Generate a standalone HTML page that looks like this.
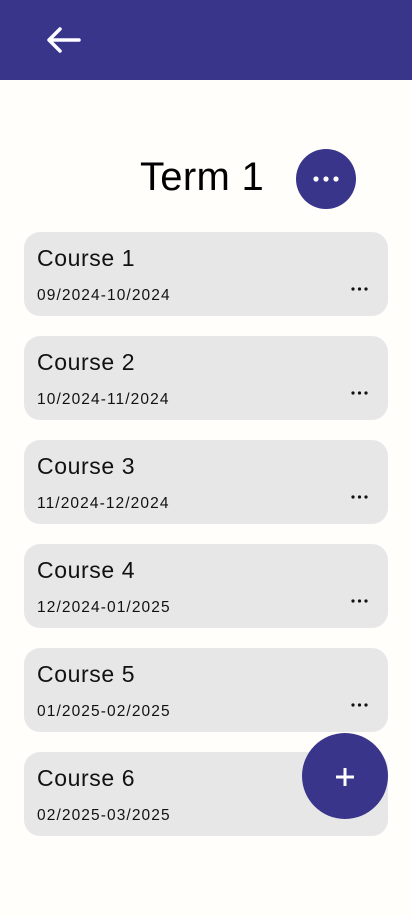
<!DOCTYPE html>
<html><head><style>
body{margin:0;width:412px;height:917px;background:#fffefa;font-family:"Liberation Sans",sans-serif;position:relative;overflow:hidden}
.hdr{position:absolute;left:0;top:0;width:412px;height:80px;background:#38358b}
.t{position:absolute;left:140px;top:151px;font-size:40px;color:#000;line-height:52px;letter-spacing:0.3px}
.c{position:absolute;left:24px;width:364px;height:84px;background:#e7e7e8;border-radius:16px}
.c .n{position:absolute;left:13px;top:11px;font-size:23px;line-height:30px;color:#111;letter-spacing:0.6px}
.c .d{position:absolute;left:13px;top:54px;font-size:15.5px;line-height:20px;color:#111;letter-spacing:1.1px}
.c .m{position:absolute;left:326px;top:52px}
.circ{position:absolute;border-radius:50%;background:#38358b}
</style></head><body>
<div class="hdr"><svg style="position:absolute;left:45px;top:24px" width="38" height="32" viewBox="0 0 38 32"><path d="M34 16H5M15 5L4 16L15 27" stroke="#fff" stroke-width="3.5" fill="none" stroke-linecap="round" stroke-linejoin="round"/></svg></div>
<div class="t">Term 1</div>
<div class="circ" style="left:296px;top:149px;width:60px;height:60px"><svg width="60" height="60"><circle cx="20" cy="30" r="2.6" fill="#fff"/><circle cx="30" cy="30" r="2.6" fill="#fff"/><circle cx="40" cy="30" r="2.6" fill="#fff"/></svg></div>
<div class="c" style="top:232px"><div class="n">Course 1</div><div class="d">09/2024-10/2024</div><svg class="m" width="20" height="10"><circle cx="3" cy="5" r="1.6" fill="#111"/><circle cx="9.5" cy="5" r="1.6" fill="#111"/><circle cx="16" cy="5" r="1.6" fill="#111"/></svg></div>
<div class="c" style="top:336px"><div class="n">Course 2</div><div class="d">10/2024-11/2024</div><svg class="m" width="20" height="10"><circle cx="3" cy="5" r="1.6" fill="#111"/><circle cx="9.5" cy="5" r="1.6" fill="#111"/><circle cx="16" cy="5" r="1.6" fill="#111"/></svg></div>
<div class="c" style="top:440px"><div class="n">Course 3</div><div class="d">11/2024-12/2024</div><svg class="m" width="20" height="10"><circle cx="3" cy="5" r="1.6" fill="#111"/><circle cx="9.5" cy="5" r="1.6" fill="#111"/><circle cx="16" cy="5" r="1.6" fill="#111"/></svg></div>
<div class="c" style="top:544px"><div class="n">Course 4</div><div class="d">12/2024-01/2025</div><svg class="m" width="20" height="10"><circle cx="3" cy="5" r="1.6" fill="#111"/><circle cx="9.5" cy="5" r="1.6" fill="#111"/><circle cx="16" cy="5" r="1.6" fill="#111"/></svg></div>
<div class="c" style="top:648px"><div class="n">Course 5</div><div class="d">01/2025-02/2025</div><svg class="m" width="20" height="10"><circle cx="3" cy="5" r="1.6" fill="#111"/><circle cx="9.5" cy="5" r="1.6" fill="#111"/><circle cx="16" cy="5" r="1.6" fill="#111"/></svg></div>
<div class="c" style="top:752px"><div class="n">Course 6</div><div class="d">02/2025-03/2025</div></div>
<div class="circ" style="left:302px;top:733px;width:86px;height:86px"><svg width="86" height="86"><path d="M43 35V53M34 44H52" stroke="#fff" stroke-width="3"/></svg></div>
</body></html>
